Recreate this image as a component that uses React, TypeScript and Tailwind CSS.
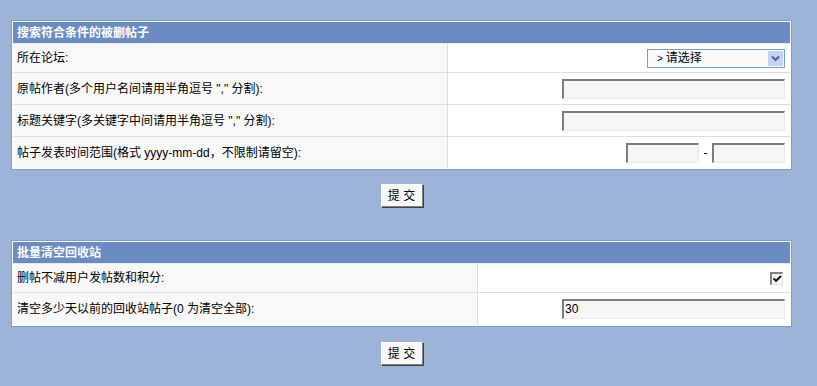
import React from "react";

const font = { fontFamily: '"Liberation Sans", "Noto Sans CJK SC", sans-serif' };

function TextBox({ w = 223, value = "" }: { w?: number; value?: string }) {
  return (
    <div
      className="h-[20px] bg-[#f6f6f4] border-t-2 border-l-2 border-r border-b border-t-[#7c7c7c] border-l-[#7c7c7c] border-r-[#ececec] border-b-[#ececec] text-[12px] leading-[16px] text-black pl-[1px]"
      style={{ width: w }}
    >
      {value}
    </div>
  );
}

function Select() {
  return (
    <div className="w-[138px] h-[19px] border border-[#7f9db9] bg-[#fafafa] flex items-center justify-between text-[12px] text-black">
      <span className="pl-[9px] flex items-center gap-[3px]">
        <span className="text-[10px]">&gt;</span>
        <span>请选择</span>
      </span>
      <span className="w-[15px] h-[15px] mr-[1px] bg-[#c1d3fb] flex items-center justify-center">
        <svg width="9" height="7" viewBox="0 0 9 7">
          <path d="M1 1.5 L4.5 5 L8 1.5" stroke="#4d6185" strokeWidth="2" fill="none" />
        </svg>
      </span>
    </div>
  );
}

function Checkbox() {
  return (
    <div className="w-[13px] h-[13px] bg-[#f4f4f4] border-t-2 border-l-2 border-t-[#808080] border-l-[#808080] border-r border-b border-r-[#e6e6e6] border-b-[#e6e6e6] flex items-center justify-center">
      <svg width="9" height="8" viewBox="0 0 9 8">
        <path d="M0.5 3.5 L3 6 L8 1" stroke="#000" strokeWidth="1.8" fill="none" />
      </svg>
    </div>
  );
}

function Row({
  label,
  leftW,
  h,
  children,
  last = false,
}: {
  label: string;
  leftW: number;
  h: number;
  children: React.ReactNode;
  last?: boolean;
}) {
  return (
    <div
      className={`flex ${last ? "" : "border-b border-[#d9dee6]"}`}
      style={{ height: h }}
    >
      <div
        className="bg-[#f8f8f8] border-r border-[#d9dee6] flex items-center pl-[4px] text-[12px] text-black"
        style={{ width: leftW }}
      >
        {label}
      </div>
      <div className="flex-1 bg-white flex items-center justify-end pr-[5px]">{children}</div>
    </div>
  );
}

function Button() {
  return (
    <div className="flex justify-center w-[781px]">
      <div className="w-[42px] h-[23px] bg-[#f8f8f8] border border-t-white border-l-white border-r-[#808080] border-b-[#808080] shadow-[1px_1px_0_#404040] flex items-center justify-center text-[12px] text-black">
        提 交
      </div>
    </div>
  );
}

export default function App() {
  return (
    <div className="w-[817px] h-[386px] bg-[#9db4d8] pt-[20px] pl-[11px] overflow-hidden" style={font}>
      <div className="w-[781px] border border-[#7f9dca] bg-white p-[1px]">
        <div className="h-[22px] bg-[#6a8cc3] flex items-center pl-[4px] text-[12px] font-bold text-white border-b border-[#e4ebf5]">
          搜索符合条件的被删帖子
        </div>
        <Row label="所在论坛:" leftW={435} h={29}>
          <Select />
        </Row>
        <Row label={'原帖作者(多个用户名间请用半角逗号 "," 分割):'} leftW={435} h={32}>
          <TextBox />
        </Row>
        <Row label={'标题关键字(多关键字中间请用半角逗号 "," 分割):'} leftW={435} h={32}>
          <TextBox />
        </Row>
        <Row label="帖子发表时间范围(格式 yyyy-mm-dd，不限制请留空):" leftW={435} h={31} last>
          <div className="flex items-center">
            <TextBox w={73} />
            <span className="w-[13px] text-center text-[12px] text-black">-</span>
            <TextBox w={73} />
          </div>
        </Row>
      </div>

      <div className="mt-[14px]">
        <Button />
      </div>

      <div className="mt-[33px] w-[781px] border border-[#7f9dca] bg-white p-[1px]">
        <div className="h-[22px] bg-[#6a8cc3] flex items-center pl-[4px] text-[12px] font-bold text-white border-b border-[#e4ebf5]">
          批量清空回收站
        </div>
        <Row label="删帖不减用户发帖数和积分:" leftW={465} h={29}>
          <div className="pr-[2px]">
            <Checkbox />
          </div>
        </Row>
        <Row label="清空多少天以前的回收站帖子(0 为清空全部):" leftW={465} h={32} last>
          <TextBox value="30" />
        </Row>
      </div>

      <div className="mt-[15px]">
        <Button />
      </div>
    </div>
  );
}
